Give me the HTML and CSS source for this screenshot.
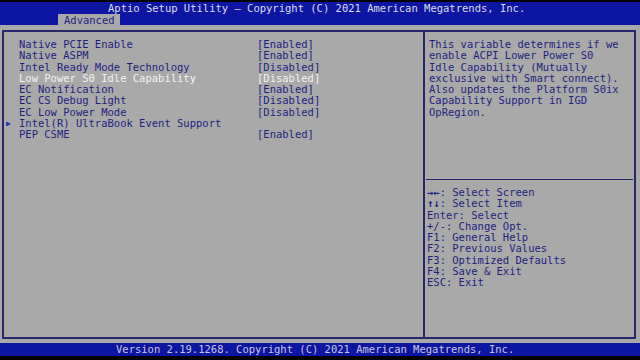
FILE: index.html
```html
<!DOCTYPE html>
<html>
<head>
<meta charset="utf-8">
<link rel="stylesheet" href="styles.css">
</head>
<body>
<div class="screen">
  <header class="top">
    <div class="title">Aptio Setup Utility – Copyright (C) 2021 American Megatrends, Inc.</div>
    <div class="tabs"><span class="tab">Advanced</span></div>
  </header>
  <main class="main">
    <div class="box">
      <section class="left">
        <div class="row"><span class="name">Native PCIE Enable</span><span class="val">[Enabled]</span></div>
        <div class="row"><span class="name">Native ASPM</span><span class="val">[Enabled]</span></div>
        <div class="row"><span class="name">Intel Ready Mode Technology</span><span class="val">[Disabled]</span></div>
        <div class="row sel"><span class="name">Low Power S0 Idle Capability</span><span class="val">[Disabled]</span></div>
        <div class="row"><span class="name">EC Notification</span><span class="val">[Enabled]</span></div>
        <div class="row"><span class="name">EC CS Debug Light</span><span class="val">[Disabled]</span></div>
        <div class="row"><span class="name">EC Low Power Mode</span><span class="val">[Disabled]</span></div>
        <div class="row sub"><span class="arrow">▶</span><span class="name">Intel(R) UltraBook Event Support</span></div>
        <div class="row"><span class="name">PEP CSME</span><span class="val">[Enabled]</span></div>
      </section>
      <aside class="right">
        <div class="help">This variable determines if we<br>enable ACPI Lower Power S0<br>Idle Capability (Mutually<br>exclusive with Smart connect).<br>Also updates the Platform S0ix<br>Capability Support in IGD<br>OpRegion.</div>
        <div class="keys">
          <div class="key"><b class="arr">→←</b>: Select Screen</div>
          <div class="key"><b class="arr">↑↓</b>: Select Item</div>
          <div class="key">Enter: Select</div>
          <div class="key">+/-: Change Opt.</div>
          <div class="key">F1: General Help</div>
          <div class="key">F2: Previous Values</div>
          <div class="key">F3: Optimized Defaults</div>
          <div class="key">F4: Save &amp; Exit</div>
          <div class="key">ESC: Exit</div>
        </div>
      </aside>
    </div>
  </main>
  <footer class="foot">Version 2.19.1268. Copyright (C) 2021 American Megatrends, Inc.</footer>
</div>
</body>
</html>
```
FILE: styles.css
```css
* { box-sizing: border-box; }
html, body { margin: 0; padding: 0; background: #000; }
body {
  font-family: "DejaVu Sans Mono", "Liberation Mono", monospace;
  font-size: 10.5px;
  line-height: 11.3px;
  color: #1f1f80;
}
.screen {
  width: 640px;
  height: 360px;
  display: flex;
  flex-direction: column;
  background: #000;
  padding-top: 2px;
  padding-bottom: 4px;
}
.top {
  height: 23px;
  background: #0c16a2;
  display: flex;
  flex-direction: column;
}
.title {
  color: #dcdce8;
  padding-left: 108px;
  padding-top: 1px;
  height: 11px;
  white-space: nowrap;
}
.tabs {
  margin-top: auto;
  padding-left: 58px;
  display: flex;
}
.tab {
  background: #a9a9a9;
  color: #1f1f80;
  height: 11px;
  width: 62px;
  padding-left: 6px;
  line-height: 13px;
}
.main {
  flex: 1;
  background: #a9a9a9;
  padding: 5px 4px 4px 2px;
  display: flex;
}
.box {
  flex: 1;
  border: 2px solid #27276a;
  display: flex;
}
.left {
  width: 421px;
  padding: 7px 0 0 2px;
  border-right: 2px solid #27276a;
}
.row {
  display: flex;
  height: 11.3px;
  white-space: nowrap;
}
.row .name {
  width: 251px;
  padding-left: 13px;
}
.row.sub .arrow {
  width: 13px;
  font-size: 8px;
  color: #2030b0;
}
.row.sub .name { padding-left: 0; width: auto; }
.row.sel { color: #f2f2f2; }
.right {
  flex: 1;
  display: flex;
  flex-direction: column;
  padding: 7px 0 0 0;
}
.help {
  padding-left: 4px;
  height: 140px;
}
.keys {
  margin: 0 1px;
  border-top: 1px solid #27276a;
  padding-top: 7px;
  padding-left: 1px;
}
.key {
  height: 11.3px;
  white-space: nowrap;
}
.arr {
  font-weight: bold;
}
.foot {
  height: 13px;
  background: #0c16a2;
  color: #c8c8dc;
  padding-left: 116px;
  line-height: 13px;
  white-space: nowrap;
}
```
